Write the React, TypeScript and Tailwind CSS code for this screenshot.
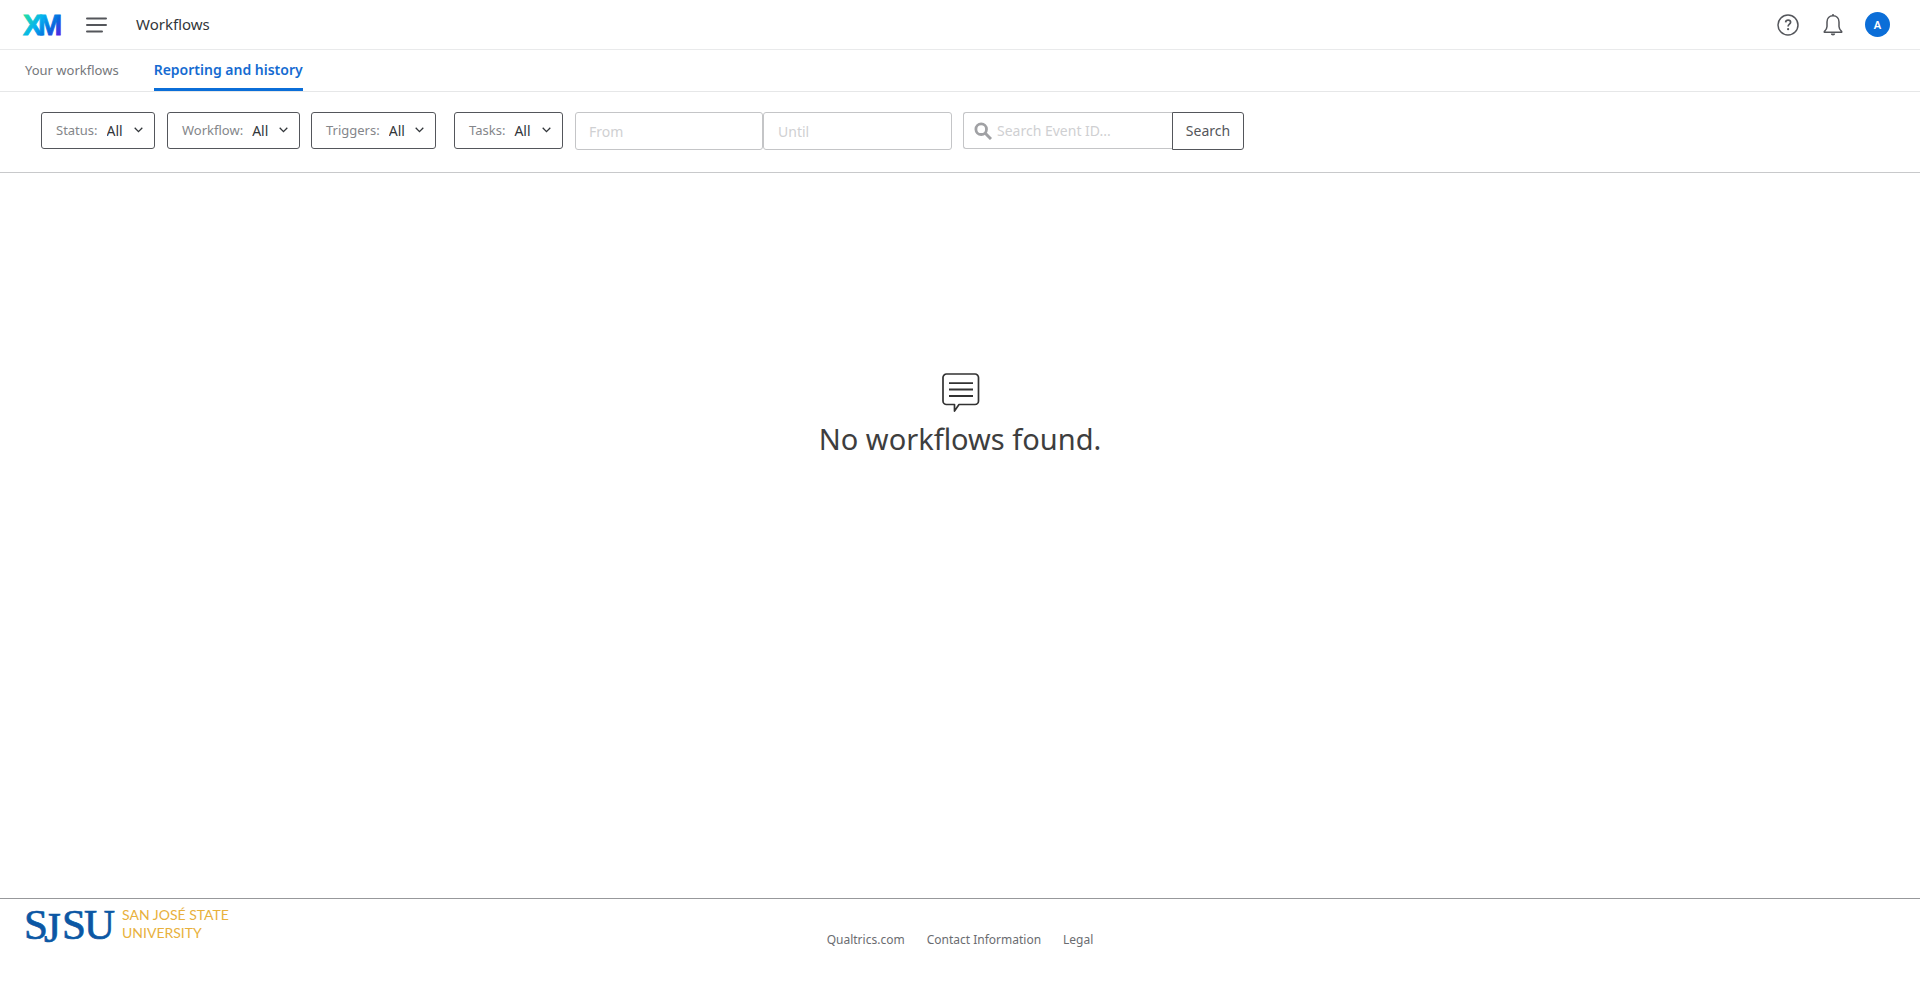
import React from "react";

const links = ["Qualtrics.com", "Contact Information", "Legal"];

function XmLogo() {
  return (
    <svg className="overflow-visible" width="38" height="22" viewBox="0 0 38 22" role="img" aria-label="XM">
      <defs>
        <linearGradient id="xm" gradientUnits="userSpaceOnUse" x1="4" y1="0" x2="36" y2="24">
          <stop offset="0" stopColor="#21dbaa" />
          <stop offset="0.35" stopColor="#04b2f0" />
          <stop offset="0.7" stopColor="#0768dd" />
          <stop offset="1" stopColor="#5f1be5" />
        </linearGradient>
      </defs>
      <text
        x="0 15"
        y="21"
        fontSize="29"
        fontWeight="700"
        fontFamily="'Liberation Sans', sans-serif"
        fill="url(#xm)"
        stroke="url(#xm)"
        strokeWidth="0.8"
      >
        XM
      </text>
    </svg>
  );
}

function SchoolLogo() {
  return (
    <svg
      className="overflow-visible"
      width="210"
      height="42"
      viewBox="0 0 210 42"
      role="img"
      aria-label="SJSU San José State University"
    >
      <text
        x="-1 19 37 59"
        y="33 36 33 33"
        fontSize="43"
        fontFamily="'Liberation Serif', serif"
        fill="#0b57a4"
        stroke="#0b57a4"
        strokeWidth="0.7"
      >
        SJSU
      </text>
      <g fontSize="14" fontFamily="Lato, sans-serif" fill="#e8b13c">
        <text x="97" y="14">
          SAN JOSÉ STATE
        </text>
        <text x="97" y="32">
          UNIVERSITY
        </text>
      </g>
    </svg>
  );
}

function Filter({ label, className }: { label: string; className: string }) {
  return (
    <label
      className={
        "relative flex h-[37px] items-center gap-[9px] rounded-[3px] border border-[#54565b] pl-3.5 text-[#84868a] " +
        className
      }
    >
      <span className="shrink-0 text-[13px]">{label}:</span>
      <select className="h-full min-w-0 flex-1 cursor-pointer appearance-none bg-transparent text-sm text-[#32363a] outline-none">
        <option>All</option>
      </select>
      <svg
        className="pointer-events-none absolute right-[11px] top-[14px]"
        width="9"
        height="6"
        viewBox="0 0 9 6"
        fill="none"
        stroke="#32363a"
        strokeWidth="1.3"
        aria-hidden="true"
      >
        <path d="M0.7 0.8 4.5 4.6 8.3 0.8" />
      </svg>
    </label>
  );
}

export default function App() {
  return (
    <div className="flex min-h-screen flex-col bg-white font-['Noto_Sans',sans-serif] text-sm text-[#32363a]">
      <header className="flex h-[50px] items-center border-b border-[#e9eaeb] pl-[23px] pr-[30px]">
        <a href="#" className="shrink-0">
          <XmLogo />
        </a>
        <button type="button" aria-label="Menu" className="ml-[25px]">
          <svg width="21" height="16" viewBox="0 0 21 16" stroke="#54565b" strokeWidth="2" strokeLinecap="round">
            <path d="M1 1.5H20M1 8H20M1 14.5H16" />
          </svg>
        </button>
        <h1 className="ml-[29px] text-[15px]">Workflows</h1>
        <div className="ml-auto flex items-center">
          <button type="button" aria-label="Help">
            <svg width="22" height="22" viewBox="0 0 22 22" fill="none" stroke="#54565b">
              <circle cx="11" cy="11" r="10" strokeWidth="1.5" />
              <path d="M8.6 8.3c.2-1.5 1.2-2.1 2.5-2.1 1.4 0 2.5.8 2.5 2.1 0 1.9-2.5 1.9-2.5 4.2" strokeWidth="1.7" />
              <circle cx="11.1" cy="15.2" r="1.1" fill="#54565b" stroke="none" />
            </svg>
          </button>
          <button type="button" aria-label="Notifications" className="ml-6">
            <svg width="20" height="22" viewBox="0 0 20 22" fill="none" stroke="#54565b" strokeWidth="1.5">
              <path
                d="M10 1.7C6.3 1.7 4 4.3 4 8v4.5c0 2.2-1 3.5-2.7 5.1v.7h17.4v-.7C17 16 16 14.7 16 12.5V8c0-3.700-2.300-6.300-6-6.300Z"
                strokeLinejoin="round"
              />
              <path d="M10 0v2" />
              <path d="M7.8 19.6h4.4a2.2 2 0 0 1-4.400 0Z" fill="#54565b" stroke="none" />
            </svg>
          </button>
          <button
            type="button"
            aria-label="Account"
            className="ml-[22px] flex size-[25px] items-center justify-center rounded-full bg-[#0b6ed8] text-[11px] font-semibold text-white"
          >
            A
          </button>
        </div>
      </header>

      <nav className="flex h-[42px] gap-[35px] border-b border-[#e6e7e8] pl-[25px]">
        <a href="#" className="flex items-center border-b-3 border-transparent pt-0.5 text-[13px] text-[#75777b]">
          Your workflows
        </a>
        <a
          href="#"
          aria-current="page"
          className="flex items-center border-b-3 border-[#0b6ed8] pt-0.5 font-semibold text-[#156bd1]"
        >
          Reporting and history
        </a>
      </nav>

      <form
        className="flex h-[81px] items-start border-b border-[#c8c9cb] pl-[41px] pt-5"
        onSubmit={(e) => e.preventDefault()}
      >
        <Filter label="Status" className="w-[114px]" />
        <Filter label="Workflow" className="ml-3 w-[133px]" />
        <Filter label="Triggers" className="ml-[11px] w-[125px]" />
        <Filter label="Tasks" className="ml-[18px] w-[109px]" />
        <input
          aria-label="From"
          placeholder="From"
          className="ml-3 h-[38px] w-[188px] rounded-[3px] border border-[#c4c5c7] px-[13px] outline-none placeholder:text-[#cfd0d2]"
        />
        <input
          aria-label="Until"
          placeholder="Until"
          className="h-[38px] w-[189px] rounded-[3px] border border-[#c4c5c7] px-[14px] outline-none placeholder:text-[#cfd0d2]"
        />
        <label className="ml-[11px] flex h-[37px] w-[209px] items-center rounded-l-[3px] border border-r-0 border-[#c4c5c7] pl-[10px]">
          <svg width="18" height="18" viewBox="0 0 18 18" fill="none" stroke="#a0a1a4" aria-hidden="true">
            <circle cx="7.2" cy="7.2" r="5.3" strokeWidth="2.8" />
            <path d="M11 11l6 6" strokeWidth="3" />
          </svg>
          <input
            aria-label="Search Event ID"
            placeholder="Search Event ID..."
            className="ml-[5px] min-w-0 flex-1 outline-none placeholder:text-[#cfd0d2]"
          />
        </label>
        <button type="submit" className="h-[38px] w-[72px] rounded-r-[3px] border border-[#54565b] text-[#54565b]">
          Search
        </button>
      </form>

      <main className="flex flex-1 flex-col items-center pt-[200px]">
        <svg
          className="overflow-visible"
          width="38"
          height="40"
          viewBox="-1 0 38 40"
          fill="none"
          stroke="#323232"
          aria-hidden="true"
        >
          <path
            d="M4.5 1h28.5a3.5 3.5 0 0 1 3.5 3.5v23.5a3.5 3.5 0 0 1-3.5 3.5H17L12.5 38V31.5H4.5A3.5 3.5 0 0 1 1 28V4.5A3.5 3.5 0 0 1 4.5 1Z"
            strokeWidth="1.7"
            strokeLinejoin="round"
          />
          <path d="M7 10.2h24M7 16.5h24M7 23h24" strokeWidth="1.8" />
        </svg>
        <p className="mt-1 text-[29px] leading-[44px] text-[#3e3e3e]">No workflows found.</p>
      </main>

      <footer className="relative flex h-[109px] items-start justify-center border-t border-[#97989b]">
        <div className="absolute left-[25px] top-[7px]">
          <SchoolLogo />
        </div>
        <ul className="flex gap-[22px] pt-[31px] text-xs leading-5 text-[#6a6c70]">
          {links.map((l) => (
            <li key={l}>
              <a href="#">{l}</a>
            </li>
          ))}
        </ul>
      </footer>
    </div>
  );
}
